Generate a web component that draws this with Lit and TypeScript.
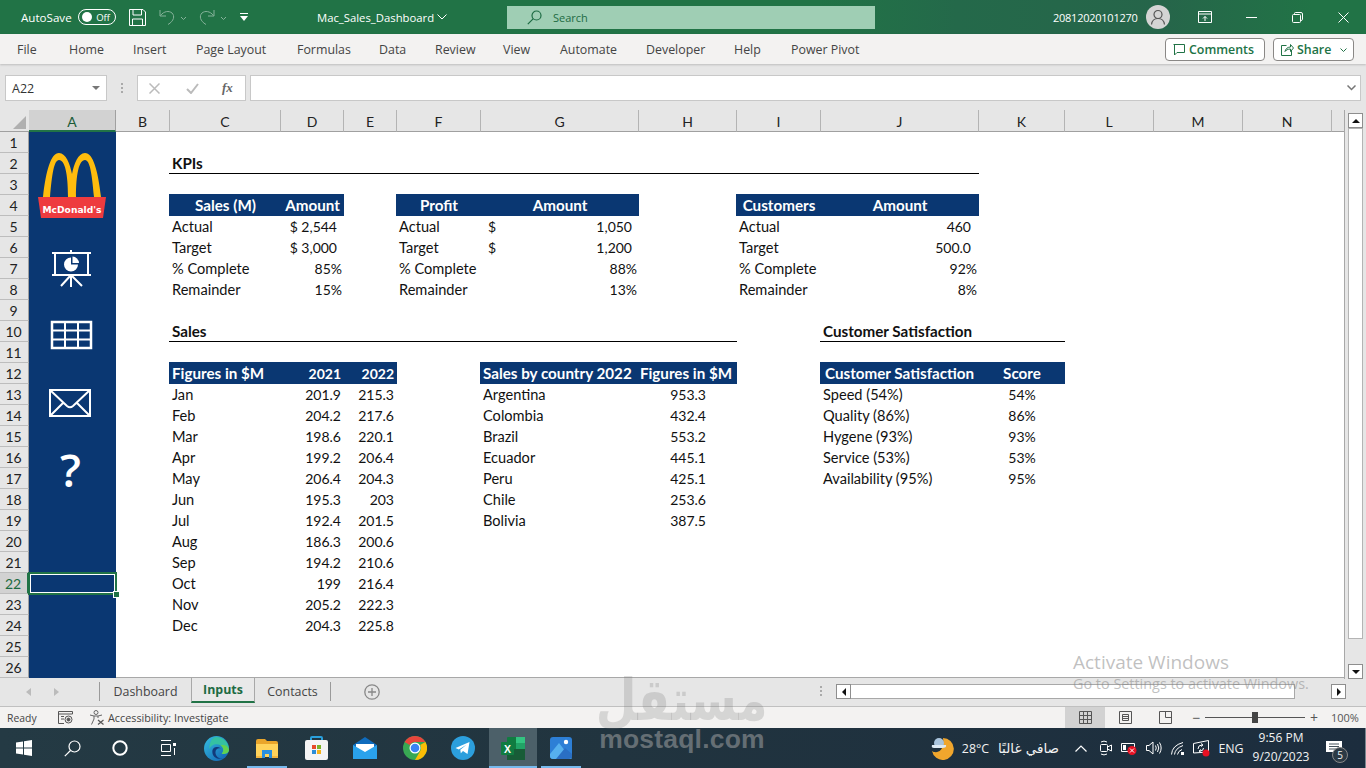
import { LitElement, html, css } from "lit";
import { customElement } from "lit/decorators.js";

const COLS = "ABCDEFGHIJKLMNO";
type C = [string, number, string, string?];
const cells: C[] = [];
const put = (c: string, r: number, t: string, k = "") => cells.push([c, r, t, k]);

// section titles
put("C", 2, "KPIs", "title");
put("C", 10, "Sales", "title");
put("J", 10, "Customer Satisfaction", "title");

// KPI tables
const kpi = (a: string, b: string, head: string, rows: string[][], cls: string[]) => {
  put(a, 4, head, "hd ctr");
  put(b, 4, "Amount", "hd ctr");
  ["Actual", "Target", "% Complete", "Remainder"].forEach((l, i) => {
    put(a, 5 + i, l, "lbl");
    put(b, 5 + i, rows[i][0], i < 2 ? cls[0] : cls[1]);
  });
};
kpi("C", "D", "Sales (M)", [["$ 2,544"], ["$ 3,000"], ["85%"], ["15%"]], ["r5", "r1"]);
kpi("F", "G", "Profit", [["1,050"], ["1,200"], ["88%"], ["13%"]], ["r5", "r1"]);
put("G", 5, "$", "dollar");
put("G", 6, "$", "dollar");
kpi("I", "J", "Customers", [["460"], ["500.0"], ["92%"], ["8%"]], ["r6", "r1"]);

// monthly
put("C", 12, "Figures in $M", "hd lbl");
put("D", 12, "2021", "hd r2");
put("E", 12, "2022", "hd r2");
const months: [string, string, string][] = [
  ["Jan", "201.9", "215.3"], ["Feb", "204.2", "217.6"], ["Mar", "198.6", "220.1"], ["Apr", "199.2", "206.4"],
  ["May", "206.4", "204.3"], ["Jun", "195.3", "203"], ["Jul", "192.4", "201.5"], ["Aug", "186.3", "200.6"],
  ["Sep", "194.2", "210.6"], ["Oct", "199", "216.4"], ["Nov", "205.2", "222.3"], ["Dec", "204.3", "225.8"],
];
months.forEach((m, i) => {
  put("C", 13 + i, m[0], "lbl");
  put("D", 13 + i, m[1], "r2");
  put("E", 13 + i, m[2], "r2");
});

// countries
put("G", 12, "Sales by country 2022", "hd lbl");
put("H", 12, "Figures in $M", "hd ctr over");
([["Argentina", "953.3"], ["Colombia", "432.4"], ["Brazil", "553.2"], ["Ecuador", "445.1"], ["Peru", "425.1"], ["Chile", "253.6"], ["Bolivia", "387.5"]] as string[][]).forEach((c, i) => {
  put("G", 13 + i, c[0], "lbl");
  put("H", 13 + i, c[1], "r30");
});

// satisfaction
put("J", 12, "Customer Satisfaction", "hd lbl p4");
put("K", 12, "Score", "hd ctr");
([["Speed (54%)", "54%"], ["Quality (86%)", "86%"], ["Hygene (93%)", "93%"], ["Service (53%)", "53%"], ["Availability (95%)", "95%"]] as string[][]).forEach((c, i) => {
  put("J", 13 + i, c[0], "lbl");
  put("K", 13 + i, c[1], "ctr");
});

const ribbon: [string, number][] = [
  ["File", 52], ["Home", 64], ["Insert", 63], ["Page Layout", 101], ["Formulas", 82], ["Data", 56], ["Review", 68],
  ["View", 57], ["Automate", 86], ["Developer", 88], ["Help", 57], ["Power Pivot", 80],
];

const logo = html`<svg class="ic logo" viewBox="0 0 70 68" aria-hidden="true">
  <path fill="#ee3b3f" d="M0 45H68L65 66H3Z"/>
  <path fill="#ffbc0d" d="M5 45C8 18 13 1 21 1C28 1 32 12 34 22C36 12 40 1 47 1C55 1 60 18 63 45L56 45C54 22 52 8 47 8C41 8 38 22 38 45L30 45C30 22 27 8 21 8C16 8 14 22 12 45Z"/>
  <text x="34" y="61" text-anchor="middle" textLength="59" lengthAdjust="spacingAndGlyphs" class="mc">McDonald's</text>
</svg>`;

const WIN = html`<svg viewBox="0 0 16 16" width="16" height="16"><path fill="#fff" d="M0 2.4 7 1.4V7.6H0ZM8 1.2 16 0V7.6H8ZM0 8.5H7V14.6L0 13.6ZM8 8.5H16V16L8 14.8Z"/></svg>`;

@customElement("app-root")
export class AppRoot extends LitElement {
  static styles = css`
    :host { display: block; width: 1366px; height: 768px; overflow: hidden; position: relative; font-family: "Open Sans", "Noto Sans", sans-serif; font-size: 12px; color: #444; background: #e6e6e6; }
    svg { display: block; flex: none; }

    .titlebar { height: 34px; background: linear-gradient(90deg, #217346 0 60%, #24694a 70%, #26654a 85%, #217346 96%); display: flex; align-items: center; color: #fff; font-size: 12px; }
    .autosave { margin-left: 21px; width: 57px; flex: none; font-size: 11.6px; white-space: nowrap; }
    .toggle { width: 38px; height: 16px; flex: none; border: 1px solid #fff; border-radius: 9px; box-sizing: border-box; display: flex; align-items: center; padding: 0 5px 0 3px; justify-content: space-between; font-size: 9.5px; }
    .toggle i { width: 10px; height: 10px; border-radius: 50%; background: #fff; }
    .save { margin-left: 13px; }
    .undo { margin-left: 13px; opacity: .45; }
    .redo { margin-left: 11px; opacity: .45; }
    .qat { margin-left: 12px; }
    .docname { margin-left: 69px; width: 120px; flex: none; white-space: nowrap; font-size: 11.3px; }
    .docchev { margin-right: 60px; }
    .search { width: 368px; height: 23px; flex: none; background: #9fceb4; color: #1d6b43; display: flex; align-items: center; font-size: 11px; box-sizing: border-box; padding-left: 20px; gap: 11px; }
    .user { margin-left: 178px; width: 93px; flex: none; font-size: 11px; letter-spacing: -.25px; white-space: nowrap; }
    .avatar { width: 24px; height: 24px; flex: none; border-radius: 50%; background: #d4d4d4; display: flex; align-items: center; justify-content: center; }
    .winbtn { width: 46px; flex: none; display: flex; justify-content: center; }
    .winbtn.first { margin-left: 12px; }

    .ribbon { height: 30px; background: #f3f2f1; display: flex; align-items: center; padding-left: 17px; box-shadow: 0 1px 2px rgba(0,0,0,.18); position: relative; font-size: 12.4px; color: #444; }
    .rtab { white-space: nowrap; flex: none; }
    .rbtn { height: 23px; box-sizing: border-box; border: 1px solid #8a8886; border-radius: 4px; background: #fff; color: #217346; display: flex; align-items: center; font-weight: 600; font-size: 12.4px; position: absolute; top: 4px; }
    .comments { left: 1165px; width: 100px; padding-left: 7px; gap: 4px; }
    .share { left: 1273px; width: 81px; padding-left: 7px; gap: 3px; }
    .share svg:last-child { margin-left: 6px; }

    .formula { height: 46px; box-sizing: border-box; padding-top: 11px; display: flex; background: #e6e6e6; }
    .namebox { margin-left: 5px; width: 102px; height: 26px; box-sizing: border-box; background: #fff; border: 1px solid #c8c8c8; display: flex; align-items: center; justify-content: space-between; padding: 0 6px; font-size: 12.5px; color: #333; }
    .vdots { margin: 8px 14px 0 14px; }
    .fbtns { width: 109px; height: 26px; box-sizing: border-box; background: #fff; border: 1px solid #c8c8c8; display: flex; align-items: center; }
    .fbtns span { font: italic bold 13px "Liberation Serif", serif; color: #666; margin-left: 23px; }
    .fbtns svg { margin-left: 11px; }
    .fbtns svg + svg { margin-left: 26px; }
    .finput { margin-left: 4px; width: 1111px; height: 26px; box-sizing: border-box; background: #fff; border: 1px solid #c8c8c8; display: flex; align-items: center; justify-content: flex-end; padding-right: 4px; }

    .sheetwrap { height: 568px; display: flex; position: relative; border-bottom: 1px solid #a8a8a8; box-sizing: border-box; }
    .grid { width: 1344px; height: 567px; display: grid; flex: none; grid-template-columns: 29px 87px 54px 111px 63px 53px 84px 158px 98px 84px 158px 86px 89px 89px 89px 12px; grid-template-rows: 22px repeat(26, 21px); background: #fff; font-family: Lato, Carlito, sans-serif; font-size: 14px; color: #111; line-height: 21px; position: relative; }
    .corner { grid-column: 1; grid-row: 1; background: #e6e6e6; border-bottom: 1px solid #a0a0a0; box-sizing: border-box; display: flex; align-items: flex-end; justify-content: flex-end; padding: 0 3px 2px 0; }
    .ch { grid-row: 1; background: #e6e6e6; border-bottom: 1px solid #a0a0a0; border-right: 1px solid #b4b4b4; box-sizing: border-box; text-align: center; color: #222; font-size: 14px; line-height: 23px; }
    .ch.sel { background: #d2d2d2; border-bottom: 2px solid #217346; color: #1a5c38; border-right-color: #a0a0a0; }
    .ch.tail { border-right: 0; }
    .rh { grid-column: 1; background: #e6e6e6; border-bottom: 1px solid #bdbdbd; border-right: 1px solid #a0a0a0; box-sizing: border-box; text-align: center; color: #222; font-size: 14px; padding-right: 1px; line-height: 22px; }
    .rh.sel { background: #d2d2d2; color: #1a6a40; border-right: 2px solid #217346; }
    .side { grid-column: 2; grid-row: 2 / 28; background: #0a3772; }
    .active { grid-column: 2; grid-row: 23; box-sizing: border-box; box-shadow: inset 0 0 0 2px #fff; outline: 2px solid #217346; outline-offset: -1px; position: relative; z-index: 2; }
    .active i { position: absolute; right: -4px; bottom: -4px; width: 5px; height: 5px; background: #217346; border: 1px solid #fff; }
    .line { border-bottom: 1px solid #000; box-sizing: border-box; align-self: stretch; margin-left: -1px; }
    .fill { background: #0a3772; margin: -1px 0 0 -1px; }
    .cell { white-space: nowrap; min-width: 0; line-height: 21px; height: 21px; position: relative; }
    .title { font-weight: 700; padding-left: 2px; line-height: 20px; font-size: 15.2px; }
    .hd { font-weight: 700; color: #fff; font-size: 15.2px; }
    .ctr { text-align: center; }
    .over { display: flex; justify-content: center; margin-left: -4px; margin-right: 0; }
    .lbl { padding-left: 2px; }
    .lbl:not(.hd) { font-size: 14.6px; }
    .p4 { padding-left: 4px; }
    .r1 { text-align: right; padding-right: 2px; }
    .r2 { text-align: right; padding-right: 3px; font-size: 14px; }
    .r5 { text-align: right; padding-right: 7px; }
    .r6 { text-align: right; padding-right: 8px; }
    .r30 { text-align: right; padding-right: 31px; }
    .dollar { padding-left: 7px; }

    .ic { position: absolute; z-index: 1; }
    .logo { left: 38px; top: 42px; width: 70px; height: 68px; }
    .mc { font: 700 8.5px "DejaVu Sans", sans-serif; fill: #fff; }
    .i-pres { left: 50px; top: 140px; }
    .i-table { left: 50px; top: 210px; }
    .i-mail { left: 48px; top: 278px; }
    .qmark { position: absolute; z-index: 1; left: 27px; width: 87px; top: 332px; text-align: center; font: 600 46px/54px "Open Sans", sans-serif; color: #fff; }

    .vscroll { flex: 1; background: #e6e6e6; border-left: 1px solid #a8a8a8; display: flex; flex-direction: column; align-items: flex-start; padding: 3px 0 0 3px; margin-bottom: -2px; box-sizing: border-box; position: relative; z-index: 1; }
    .sbtn { width: 15px; height: 15px; box-sizing: border-box; background: #fff; border: 1px solid #8e8e8e; display: flex; align-items: center; justify-content: center; flex: none; }
    .vthumb { width: 15px; height: 511px; background: #fff; border: 1px solid #b4b4b4; box-sizing: border-box; flex: none; }
    .vgap { flex: 1; }

    .tabs { height: 29px; box-sizing: border-box; background: #e6e6e6; display: flex; align-items: stretch; border-bottom: 1px solid #c0c0c0; font-size: 12.4px; color: #444; }
    .nav { width: 100px; display: flex; align-items: center; padding-left: 26px; gap: 23px; box-sizing: border-box; border-right: 1px solid #9a9a9a; margin: 4px 0 5px; }
    .tab { display: flex; align-items: center; justify-content: center; box-sizing: border-box; padding-bottom: 1px; }
    .t1 { width: 91px; }
    .t2 { width: 64px; background: #e9e9e9; border: 1px solid #a8a8a8; border-bottom: 2px solid #217346; border-top: 0; color: #1d6b43; font-weight: 700; margin-bottom: 3px; }
    .t3 { width: 76px; border-right: 1px solid #9a9a9a; margin: 4px 0 5px; padding: 0; }
    .plus { margin: 6px 0 0 33px; }
    .hdots { margin: 8px 14px 0 440px; }
    .hscroll { display: flex; margin-top: 6px; height: 15px; align-items: stretch; }
    .hthumb { width: 444px; background: #fff; border: 1px solid #a8a8a8; border-left: 0; box-sizing: border-box; }
    .hgap { width: 36px; }

    .status { height: 21px; background: #f3f2f1; display: flex; align-items: center; font-size: 10.8px; color: #444; position: relative; }
    .ready { margin-left: 7px; width: 51px; flex: none; font-size: 10.4px; }
    .acc { margin-left: 16px; margin-right: 3px; }
    .views { position: absolute; left: 1065px; top: 0; display: flex; height: 21px; }
    .vw { width: 40px; display: flex; align-items: center; justify-content: center; }
    .vw.on { background: #d2d2d2; }
    .zoom { position: absolute; left: 1192px; top: 0; height: 21px; display: flex; align-items: center; gap: 4px; color: #555; font-size: 11px; }
    .zsign { width: 9px; text-align: center; font-size: 14px; line-height: 21px; }
    .zsign.p { width: 10px; }
    .track { width: 100px; height: 1px; background: #555; position: relative; }
    .track i { position: absolute; left: 47px; top: -5px; width: 6px; height: 11px; background: #444; }
    .pct { margin-left: 8px; }

    .taskbar { height: 40px; background: linear-gradient(90deg, #243a44, #21343f 45%, #1c2d3e); display: flex; align-items: center; color: #fff; position: relative; }
    .slot { width: 48px; height: 40px; display: flex; align-items: center; justify-content: center; flex: none; position: relative; box-sizing: border-box; }
    .m1 { margin-left: 1px; } .m2 { margin-left: 2px; } .m3 { margin-left: 3px; }
    .run::after { content: ""; position: absolute; left: 4px; right: 4px; bottom: 0; height: 2px; background: #76b9ed; }
    .slot.act { background: #4c6069; }
    .slot.act::after { left: 0; right: 0; }
    .tray { position: absolute; left: 928px; top: 0; height: 40px; display: flex; align-items: center; font-size: 12.4px; color: #f2f2f2; }
    .tw { display: flex; align-items: center; justify-content: center; flex: none; }
    .w28 { width: 28px; } .w39 { width: 39px; } .w67 { width: 67px; } .w25 { width: 25px; } .w20 { width: 20px; } .w26 { width: 26px; } .w23 { width: 23px; }
    .w36 { width: 36px; } .w62 { width: 62px; margin-left: 1px; } .w44 { width: 44px; } .wcar { width: 30px; margin-left: 4px; }
    .ar { font-family: "DejaVu Sans", "Noto Sans", sans-serif; font-size: 13.5px; direction: rtl; white-space: nowrap; }
    .clock { flex-direction: column; line-height: 19px; font-size: 12px; text-align: center; margin-top: -2px; }
    .note { position: relative; height: 30px; }
    .badge { position: absolute; left: 20px; top: 14px; width: 16px; height: 16px; box-sizing: border-box; background: #2c3a45; border: 1px solid #888; border-radius: 50%; font-size: 10px; line-height: 14px; text-align: center; }
    .desk { position: absolute; right: 0; top: 0; width: 1px; height: 40px; background: #7b8790; }

    .wm-ar { position: absolute; left: 591px; top: 676px; width: 195px; text-align: center; font: 700 58px/48px "DejaVu Sans", sans-serif; color: rgba(110,110,110,.22); direction: rtl; white-space: nowrap; z-index: 5; pointer-events: none; transform: scaleX(.81); }
    .wm-en { position: absolute; left: 589px; top: 724px; width: 186px; text-align: center; font: 700 26.5px/30px "Liberation Sans", sans-serif; color: rgba(170,170,170,.5); white-space: nowrap; z-index: 5; letter-spacing: .2px; }
    .act1 { position: absolute; left: 1073px; top: 650px; font: 400 19px/24px "Open Sans", sans-serif; color: rgba(130,130,130,.5); white-space: nowrap; z-index: 6; }
    .act2 { position: absolute; left: 1073px; top: 675px; font: 400 14.4px/18px "Open Sans", sans-serif; color: rgba(130,130,130,.5); white-space: nowrap; z-index: 6; }
  `;

  render() {
    return html`
      <div class="titlebar">
        <span class="autosave">AutoSave</span>
        <div class="toggle"><i></i><span>Off</span></div>
        <svg class="save" width="17" height="17" viewBox="0 0 17 17" fill="none" stroke="#fff"><path d="M.5.5H14L16.5 3V16.5H.5ZM4 .5V6H12.5V.5M3.5 16.5V10H13.5V16.5"/></svg>
        <svg class="undo" width="29" height="17" viewBox="0 0 29 17" fill="none" stroke="#fff"><path d="M1 1V7H7M1.5 6.5C5 2 10 1.500 13 4C16 7 15 12 9 15.500"/><path d="M22 8 24.500 10.500 27 8"/></svg>
        <svg class="redo" width="29" height="17" viewBox="0 0 29 17" fill="none" stroke="#fff"><path d="M15 1V7H9M14.500 6.500C11 2 6 1.500 3 4C0 7 1 12 7 15.500"/><path d="M22 8 24.500 10.500 27 8"/></svg>
        <svg class="qat" width="8" height="9" viewBox="0 0 8 9" fill="#fff"><path d="M0 0H8V1H0ZM0 3H8L4 8Z"/></svg>
        <span class="docname">Mac_Sales_Dashboard</span>
        <svg class="docchev" width="10" height="6" viewBox="0 0 10 6" fill="none" stroke="#fff"><path d="M.5.5 5 5 9.500.5"/></svg>
        <div class="search">
          <svg width="15" height="15" viewBox="0 0 15 15" fill="none" stroke="#1d6b43" stroke-width="1.200"><circle cx="9.500" cy="5.500" r="4.500"/><path d="M6.300 8.700 .8 14.200"/></svg>
          <span>Search</span>
        </div>
        <span class="user">20812020101270</span>
        <div class="avatar"><svg width="16" height="16" viewBox="0 0 16 16" fill="none" stroke="#555" stroke-width="1.200"><circle cx="8" cy="5.500" r="4"/><path d="M1.500 15.500C2 11.500 5 9.500 8 9.500S14 11.500 14.500 15.500"/></svg></div>
        <div class="winbtn first"><svg width="14" height="12" viewBox="0 0 14 12" fill="none" stroke="#fff"><path d="M.5.5H13.500V11.500H.5ZM.5 3H13.500M7 10V5.500M5 7.500 7 5.500 9 7.500"/></svg></div>
        <div class="winbtn"><svg width="11" height="1" viewBox="0 0 11 1"><path d="M0 0H11V1H0Z" fill="#fff"/></svg></div>
        <div class="winbtn"><svg width="11" height="11" viewBox="0 0 11 11" fill="none" stroke="#fff"><rect x=".5" y="2.500" width="8" height="8" rx="1"/><path d="M2.500 2.500V1.500Q2.500.5 3.500.5H9Q10.500.5 10.500 2V7.500Q10.500 8.500 8.500 8.500"/></svg></div>
        <div class="winbtn"><svg width="11" height="11" viewBox="0 0 11 11" stroke="#fff"><path d="M.5.5 10.500 10.500M10.500.5 .5 10.500"/></svg></div>
      </div>

      <div class="ribbon">
        ${ribbon.map(([t, w]) => html`<span class="rtab" style="width:${w}px">${t}</span>`)}
        <div class="rbtn comments"><svg width="12" height="12" viewBox="0 0 12 12" fill="none" stroke="#217346"><path d="M.5.5H11.500V8.500H4L1.500 11V.5"/></svg>Comments</div>
        <div class="rbtn share"><svg width="13" height="13" viewBox="0 0 13 13" fill="none" stroke="#217346"><path d="M5.500 2.500H.5V12.500H10.500V7M4 8.500C4.500 5.500 7 4 9.500 4V1.500L12.500 5 9.500 8.500V6C7 6 5 7 4 8.500Z"/></svg>Share<svg width="7" height="4" viewBox="0 0 7 4" fill="none" stroke="#217346"><path d="M.5.5 3.500 3.500 6.500.5"/></svg></div>
      </div>

      <div class="formula">
        <div class="namebox"><span>A22</span><svg width="8" height="4" viewBox="0 0 8 4"><path d="M0 0H8L4 4Z" fill="#777"/></svg></div>
        <svg class="vdots" width="2" height="10" viewBox="0 0 2 10" fill="#aaa"><path d="M0 0H2V2H0ZM0 4H2V6H0ZM0 8H2V10H0Z"/></svg>
        <div class="fbtns">
          <svg width="11" height="11" viewBox="0 0 11 11" stroke="#bbb" stroke-width="1.500"><path d="M.5.5 10.500 10.500M10.500.5 .5 10.500"/></svg>
          <svg width="13" height="11" viewBox="0 0 13 11" fill="none" stroke="#bbb" stroke-width="2"><path d="M1 6 5 10 12 1"/></svg>
          <span>fx</span>
        </div>
        <div class="finput"><svg width="9" height="6" viewBox="0 0 9 6" fill="none" stroke="#777" stroke-width="1.500"><path d="M.5.5 4.500 4.500 8.500.5"/></svg></div>
      </div>

      <div class="sheetwrap">
        <div class="grid">
          <div class="corner"><svg width="13" height="13" viewBox="0 0 13 13"><path d="M13 0V13H0Z" fill="#b0b0b0"/></svg></div>
          ${[...COLS].map((c, i) => html`<div class="ch ${c === "A" ? "sel" : ""} ${c === "O" ? "tail" : ""}" style="grid-column:${i + 2}">${c === "O" ? "" : c}</div>`)}
          ${Array.from({ length: 26 }, (_, i) => html`<div class="rh ${i === 21 ? "sel" : ""}" style="grid-row:${i + 2}">${i + 1}</div>`)}
          <div class="side"></div>
          <div class="active"><i></i></div>

          ${this.bar("C", "J", 2, "line")}
          ${this.bar("C", "H", 10, "line")}
          ${this.bar("J", "K", 10, "line")}
          ${this.bar("C", "D", 4, "fill")}
          ${this.bar("F", "G", 4, "fill")}
          ${this.bar("I", "J", 4, "fill")}
          ${this.bar("C", "E", 12, "fill")}
          ${this.bar("G", "H", 12, "fill")}
          ${this.bar("J", "K", 12, "fill")}

          ${cells.map(([c, r, t, k]) => html`<div class="cell ${k}" style="grid-column:${COLS.indexOf(c) + 2};grid-row:${r + 1}">${t}</div>`)}

          ${logo}
          <svg class="ic i-pres" width="42" height="38" viewBox="0 0 42 38" fill="none" stroke="#fff" stroke-width="2">
            <path d="M2 3H41M5 3V25M38 3V25M2 25H41M21 0V3M21 25V37M21 25 11 36M21 25 32 36"/>
            <path d="M21 7.500A7 7 0 1 0 28 14.500H21Z" fill="#fff" stroke="none"/>
            <path d="M22.500 6.500A7 7 0 0 1 29 13H22.500Z" fill="#fff" stroke="none"/>
          </svg>
          <svg class="ic i-table" width="44" height="30" viewBox="0 0 44 30" fill="none" stroke="#fff" stroke-width="2">
            <rect x="2" y="2" width="39" height="26" stroke-width="2.500"/>
            <path d="M15 2V28M28 2V28M2 10.500H41M2 19.500H41"/>
          </svg>
          <svg class="ic i-mail" width="44" height="30" viewBox="0 0 44 30" fill="none" stroke="#fff" stroke-width="2">
            <rect x="2" y="2" width="40" height="26"/>
            <path d="M2 2 19 18Q22 20.500 25 18L42 2M2 28 15 15M42 28 29 15"/>
          </svg>
          <div class="qmark">?</div>
        </div>
        <div class="vscroll">
          <div class="sbtn"><svg width="8" height="4" viewBox="0 0 8 4"><path d="M0 4H8L4 0Z" fill="#111"/></svg></div>
          <div class="vthumb"></div>
          <div class="vgap"></div>
          <div class="sbtn"><svg width="8" height="4" viewBox="0 0 8 4"><path d="M0 0H8L4 4Z" fill="#111"/></svg></div>
        </div>
      </div>

      <div class="tabs">
        <div class="nav">
          <svg width="5" height="8" viewBox="0 0 5 8"><path d="M5 0V8L0 4Z" fill="#bbb"/></svg>
          <svg width="5" height="8" viewBox="0 0 5 8"><path d="M0 0V8L5 4Z" fill="#bbb"/></svg>
        </div>
        <div class="tab t1">Dashboard</div>
        <div class="tab t2">Inputs</div>
        <div class="tab t3">Contacts</div>
        <svg class="plus" width="16" height="16" viewBox="0 0 16 16" fill="none" stroke="#888" stroke-width="1.300"><circle cx="8" cy="8" r="7.200"/><path d="M8 4V12M4 8H12"/></svg>
        <svg class="hdots" width="2" height="10" viewBox="0 0 2 10" fill="#aaa"><path d="M0 0H2V2H0ZM0 4H2V6H0ZM0 8H2V10H0Z"/></svg>
        <div class="hscroll">
          <div class="sbtn"><svg width="4" height="8" viewBox="0 0 4 8"><path d="M4 0V8L0 4Z" fill="#111"/></svg></div>
          <div class="hthumb"></div>
          <div class="hgap"></div>
          <div class="sbtn"><svg width="4" height="8" viewBox="0 0 4 8"><path d="M0 0V8L4 4Z" fill="#111"/></svg></div>
        </div>
      </div>

      <div class="status">
        <span class="ready">Ready</span>
        <svg width="15" height="13" viewBox="0 0 15 13" fill="none" stroke="#555"><path d="M.5.5H14.500V3H.5ZM.5 3V12.500H6M3 5.500H6M3 8H6"/><circle cx="10.500" cy="8.500" r="3.500"/><circle cx="10.500" cy="8.500" r="1.500" fill="#555"/></svg>
        <svg class="acc" width="16" height="15" viewBox="0 0 16 15" fill="none" stroke="#666"><circle cx="7" cy="2.500" r="2"/><path d="M1 5 5 6H9L13 5M5 6V9L2.500 14.500M9 6V8"/><path d="M9 10 14.500 14.500M14.500 10 9 14.500" stroke="#555" stroke-width="1.200"/></svg>
        <span>Accessibility: Investigate</span>
        <div class="views">
          <div class="vw on"><svg width="13" height="13" viewBox="0 0 13 13" fill="none" stroke="#555"><path d="M.5.5H12.500V12.500H.5ZM4.500.5V12.500M8.500.5V12.500M.5 4.500H12.500M.5 8.500H12.500"/></svg></div>
          <div class="vw"><svg width="13" height="13" viewBox="0 0 13 13" fill="none" stroke="#555"><path d="M.5.5H12.500V12.500H.5ZM3.500 3.500H9.500V9.500H3.500ZM3.500 5.500H9.500M3.500 7.500H9.500"/></svg></div>
          <div class="vw"><svg width="13" height="13" viewBox="0 0 13 13" fill="none" stroke="#555"><path d="M.5.5H12.500V12.500H.5ZM6.500.5V6.500H12.500"/></svg></div>
        </div>
        <div class="zoom"><span class="zsign">−</span><div class="track"><i></i></div><span class="zsign p">+</span><span class="pct">100%</span></div>
      </div>

      <div class="taskbar">
        <div class="slot">${WIN}</div>
        <div class="slot"><svg width="17" height="17" viewBox="0 0 17 17" fill="none" stroke="#fff" stroke-width="1.200"><circle cx="10.500" cy="6.500" r="5.500"/><path d="M6.500 10.500 .8 16.200"/></svg></div>
        <div class="slot"><svg width="16" height="16" viewBox="0 0 16 16" fill="none" stroke="#fff" stroke-width="2"><circle cx="8" cy="8" r="6.700"/></svg></div>
        <div class="slot"><svg width="16" height="16" viewBox="0 0 16 16" fill="none" stroke="#fff"><path d="M1 .5H11M1 15.500H11M1.500 4.500H10.500V11.500H1.500Z"/><path d="M13 3H16V6H13Z" fill="#fff" stroke="none"/><path d="M14.500 8V15" /></svg></div>
        <div class="slot"><svg width="25" height="25" viewBox="0 0 24 24"><defs><linearGradient id="e1" x1="0" y1="0" x2="1" y2="1"><stop offset="0" stop-color="#36c0e0"/><stop offset="1" stop-color="#0f5cb0"/></linearGradient></defs><circle cx="12" cy="12" r="12" fill="url(#e1)"/><path d="M12 1C18 1 24 6 24 13C24 16 21 18 17 17C20 14 18 8 12 8C9 8 6 10 5 13C5 6 8 1 12 1Z" fill="#35c1a2"/><path d="M24 13C24 16 21 18 17 17C19.500 14.500 19 11 16 9C20 8 23 10 24 13Z" fill="#63d24f"/><path d="M8 15C8 20 13 23 18 21.500C14 22 11 19 11 15.500C11 12.500 14 11 16 12C14 9.500 8 10 8 15Z" fill="#123a7a"/></svg></div>
        <div class="slot m3 run"><svg width="22" height="19" viewBox="0 0 22 19"><path d="M0 2Q0 0 2 0H9L11 2H20Q22 2 22 4V6H0Z" fill="#e9a52b"/><path d="M0 5H22V18H0Z" fill="#ffd35b"/><path d="M6 11H16V19H13V15H9V19H6Z" fill="#2a8fde"/><path d="M0 17H6V19H0ZM16 17H22V19H16Z" fill="#f4b63f"/></svg></div>
        <div class="slot m1"><svg width="23" height="24" viewBox="0 0 23 24"><path d="M6 5V2Q6 1 7 1H16Q17 1 17 2V5" fill="none" stroke="#2aa0dc" stroke-width="2"/><rect y="4" width="23" height="20" rx="2" fill="#f5f5f5"/><path d="M7 9H11V13H7Z" fill="#e74c2a"/><path d="M12 9H16V13H12Z" fill="#7db32a"/><path d="M7 14H11V18H7Z" fill="#2d8ed8"/><path d="M12 14H16V18H12Z" fill="#f5b21c"/></svg></div>
        <div class="slot m1"><svg width="24" height="22" viewBox="0 0 24 22"><path d="M0 8 12 0 24 8V22H0Z" fill="#0f6cbd"/><path d="M3 7H21V14L12 19 3 14Z" fill="#fff"/><path d="M0 8 12 15 24 8V22H0Z" fill="#2aa2ec"/></svg></div>
        <div class="slot m2"><svg width="24" height="24" viewBox="0 0 24 24"><circle cx="12" cy="12" r="12" fill="#38a853"/><path d="M12 0A12 12 0 0 1 22.400 6H12A6 6 0 0 0 6.800 9L1.600 6A12 12 0 0 1 12 0Z" fill="#e8453c"/><path d="M22.400 6A12 12 0 0 1 12 24L17.200 15A6 6 0 0 0 17.200 9Z" fill="#fbbd06"/><circle cx="12" cy="12" r="5.500" fill="#fff"/><circle cx="12" cy="12" r="4.300" fill="#3b83f5"/></svg></div>
        <div class="slot"><svg width="24" height="24" viewBox="0 0 24 24"><circle cx="12" cy="12" r="12" fill="#2c9fdd"/><path d="M4.500 12 18.500 6 16.500 18 12 15 9.800 17.200 9.300 13.800 15.500 8.800 7.800 13.400Z" fill="#fff"/></svg></div>
        <div class="slot m2 run act"><svg width="24" height="23" viewBox="0 0 24 23"><rect x="6" y="0" width="18" height="23" rx="1" fill="#107c41"/><path d="M15 0H24V6H15Z" fill="#33c481"/><path d="M15 6H24V12H15Z" fill="#21a366"/><path d="M6 12H24V23H6Z" fill="#185c37"/><rect x="0" y="5" width="13" height="13" rx="1" fill="#107c41"/><text x="6.500" y="15.500" text-anchor="middle" fill="#fff" font-family="Liberation Sans" font-weight="700" font-size="10.500">X</text></svg></div>
        <div class="slot run"><svg width="22" height="22" viewBox="0 0 22 22"><rect width="22" height="22" rx="3" fill="#2d7fd6"/><circle cx="16" cy="5" r="2.200" fill="#fff"/><path d="M0 17 9 6 19 19 22 22H3Q0 22 0 19Z" fill="#56b0ee"/><path d="M6 22 15 11 22 17V19Q22 22 19 22Z" fill="#2a6fc4"/></svg></div>

        <div class="tray">
          <div class="tw w28"><svg width="24" height="24" viewBox="0 0 24 24"><path d="M13 2A11 11 0 1 1 2 15C6 18 15 16 13 2Z" fill="#f0a62d"/><circle cx="9" cy="7" r="5" fill="#a9c4dd"/><path d="M2 9H16Q17 12 12 12H4Q1 12 2 9Z" fill="#dde9f3"/></svg></div>
          <div class="tw w39">28°C</div>
          <div class="tw w67"><span class="ar">صافي غالبًا</span></div>
          <div class="tw wcar"><svg width="12" height="7" viewBox="0 0 12 7" fill="none" stroke="#fff" stroke-width="1.200"><path d="M.5 6.500 6 1 11.500 6.500"/></svg></div>
          <div class="tw w20"><svg width="12" height="16" viewBox="0 0 12 16" fill="none" stroke="#fff"><rect x=".5" y="4.500" width="7" height="7" rx="1"/><path d="M7.500 7 11.500 5V11L7.500 9M1 2Q4 .2 7 2M1 14Q4 15.800 7 14"/></svg></div>
          <div class="tw w26"><svg width="16" height="14" viewBox="0 0 16 14"><path d="M.5 2.500H13.500V10.500H.5Z" fill="none" stroke="#fff"/><path d="M2 4H5V9H2Z" fill="#fff"/><circle cx="11" cy="9.500" r="4.500" fill="#e81123"/><path d="M9 7.500 13 11.500M13 7.500 9 11.500" stroke="#fff"/></svg></div>
          <div class="tw w23"><svg width="16" height="14" viewBox="0 0 16 14" fill="none" stroke="#fff"><path d="M.5 4.500H3L7 1V13L3 9.500H.5ZM9.500 4.500Q11 7 9.500 9.500M11.500 3Q14 7 11.500 11M13.500 1.500Q16.800 7 13.500 12.500"/></svg></div>
          <div class="tw w25"><svg width="14" height="13" viewBox="0 0 14 13" fill="none" stroke="#fff"><path d="M.5 12.500Q1 3.500 12 .5M3.500 12.500Q4 6.500 12 3.500M6.500 12.500Q7 9 11 7.500"/><rect x="10" y="10" width="3" height="3" fill="#fff" stroke="none"/></svg></div>
          <div class="tw w23"><svg width="17" height="17" viewBox="0 0 17 17"><path d="M.5 3.500 15.500.5V12L.5 13Z" fill="none" stroke="#fff"/><path d="M5 9Q5 5 9 5M10.500 8Q10.500 11 7 11M8 3.500 10 5 8 6.500M8 9.500 6 11 8 12.500" fill="none" stroke="#fff"/><circle cx="13" cy="13" r="3.500" fill="#e81123"/></svg></div>
          <div class="tw w36">ENG</div>
          <div class="tw w62 clock"><span>9:56 PM</span><span>9/20/2023</span></div>
          <div class="tw w44 note"><svg width="16" height="14" viewBox="0 0 16 14"><path d="M0 0H16V11H10L7 14V11H0Z" fill="#fff"/><path d="M3 3H13M3 5.500H13M3 8H13" stroke="#44525c"/></svg><span class="badge">5</span></div>
        </div>
        <div class="desk"></div>
      </div>

      <div class="wm-ar">مستقل</div>
      <div class="wm-en">mostaql.com</div>
      <div class="act1">Activate Windows</div>
      <div class="act2">Go to Settings to activate Windows.</div>
    `;
  }

  bar(a: string, b: string, row: number, cls: string) {
    return html`<div class=${cls} style="grid-column:${COLS.indexOf(a) + 2}/${COLS.indexOf(b) + 3};grid-row:${row + 1}"></div>`;
  }
}
